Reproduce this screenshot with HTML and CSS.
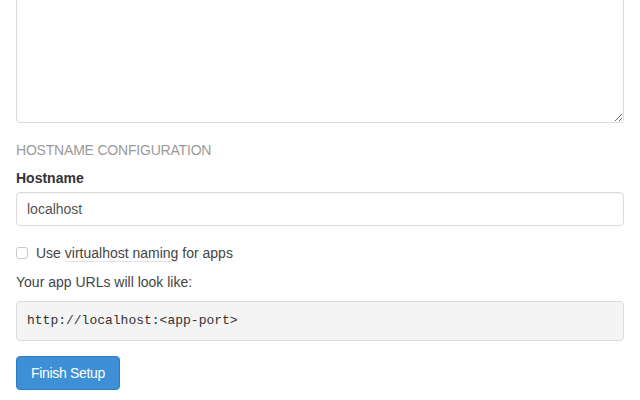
FILE: index.html
```html
<!DOCTYPE html>
<html>
<head>
<meta charset="utf-8">
<link rel="stylesheet" href="styles.css">
</head>
<body>
<div class="page">
  <textarea class="notes"></textarea>
  <h4 class="section-title">HOSTNAME CONFIGURATION</h4>
  <label class="field-label" for="host">Hostname</label>
  <input id="host" class="text-input" type="text" value="localhost">
  <label class="check-row"><input type="checkbox" class="check"> <span>Use <abbr class="hint" title="subdomain per app">virtualhost naming</abbr> for apps</span></label>
  <p class="note">Your app URLs will look like:</p>
  <pre class="url-preview">http://localhost:&lt;app-port&gt;</pre>
  <button class="btn-primary" type="button">Finish Setup</button>
</div>
</body>
</html>
```
FILE: styles.css
```css
html, body {
  margin: 0;
  padding: 0;
  background: #fff;
}
body {
  font-family: "Liberation Sans", Arial, sans-serif;
  font-size: 14px;
  line-height: 20px;
  color: #333;
  overflow: hidden;
}
.page {
  padding: 0 16px 0 16px;
  display: flex;
  flex-direction: column;
  align-items: flex-start;
}
.notes {
  display: block;
  box-sizing: border-box;
  width: 608px;
  height: 163px;
  margin: -40px 0 0 0;
  border: 1px solid #dcdcdc;
  border-radius: 4px;
  box-shadow: inset 0 1px 1px rgba(0,0,0,0.04);
  resize: vertical;
  font: inherit;
}
.section-title {
  margin: 17px 0 0 0;
  font-size: 14px;
  font-weight: normal;
  line-height: 20px;
  color: #9a9a9a;
  letter-spacing: -0.2px;
}
.field-label {
  margin: 8px 0 4px 0;
  font-weight: bold;
  line-height: 20px;
}
.text-input {
  box-sizing: border-box;
  width: 608px;
  height: 34px;
  margin: 0;
  padding: 6px 10px;
  border: 1px solid #dcdcdc;
  border-radius: 4px;
  box-shadow: inset 0 1px 1px rgba(0,0,0,0.04);
  font: inherit;
  color: #555;
  outline: none;
}
.check-row {
  margin: 17px 0 0 0;
  display: flex;
  align-items: center;
  gap: 8px;
  line-height: 20px;
  color: #444;
}
.check {
  margin: 0;
  width: 12px;
  height: 12px;
  appearance: none;
  -webkit-appearance: none;
  border: 1px solid #c8c8c8;
  border-radius: 3px;
  background: #fff;
}
.hint {
  text-decoration: none;
  border-bottom: 1px solid #e2e2e2;
}
.note {
  margin: 9px 0 0 0;
  line-height: 20px;
  color: #444;
}
.url-preview {
  box-sizing: border-box;
  width: 608px;
  height: 40px;
  margin: 9px 0 0 0;
  padding: 10px 10px;
  background: #f4f4f4;
  border: 1px solid #dcdcdc;
  border-radius: 4px;
  font-family: "Liberation Mono", "DejaVu Sans Mono", monospace;
  font-size: 13px;
  line-height: 18px;
  color: #333;
}
.btn-primary {
  margin: 15px 0 0 0;
  box-sizing: border-box;
  width: 104px;
  height: 34px;
  padding: 0 12px;
  background: #3d8fd6;
  border: 1px solid #2f7cc4;
  border-radius: 4px;
  color: #fff;
  font: inherit;
  font-size: 14px;
  letter-spacing: -0.3px;
}
```
